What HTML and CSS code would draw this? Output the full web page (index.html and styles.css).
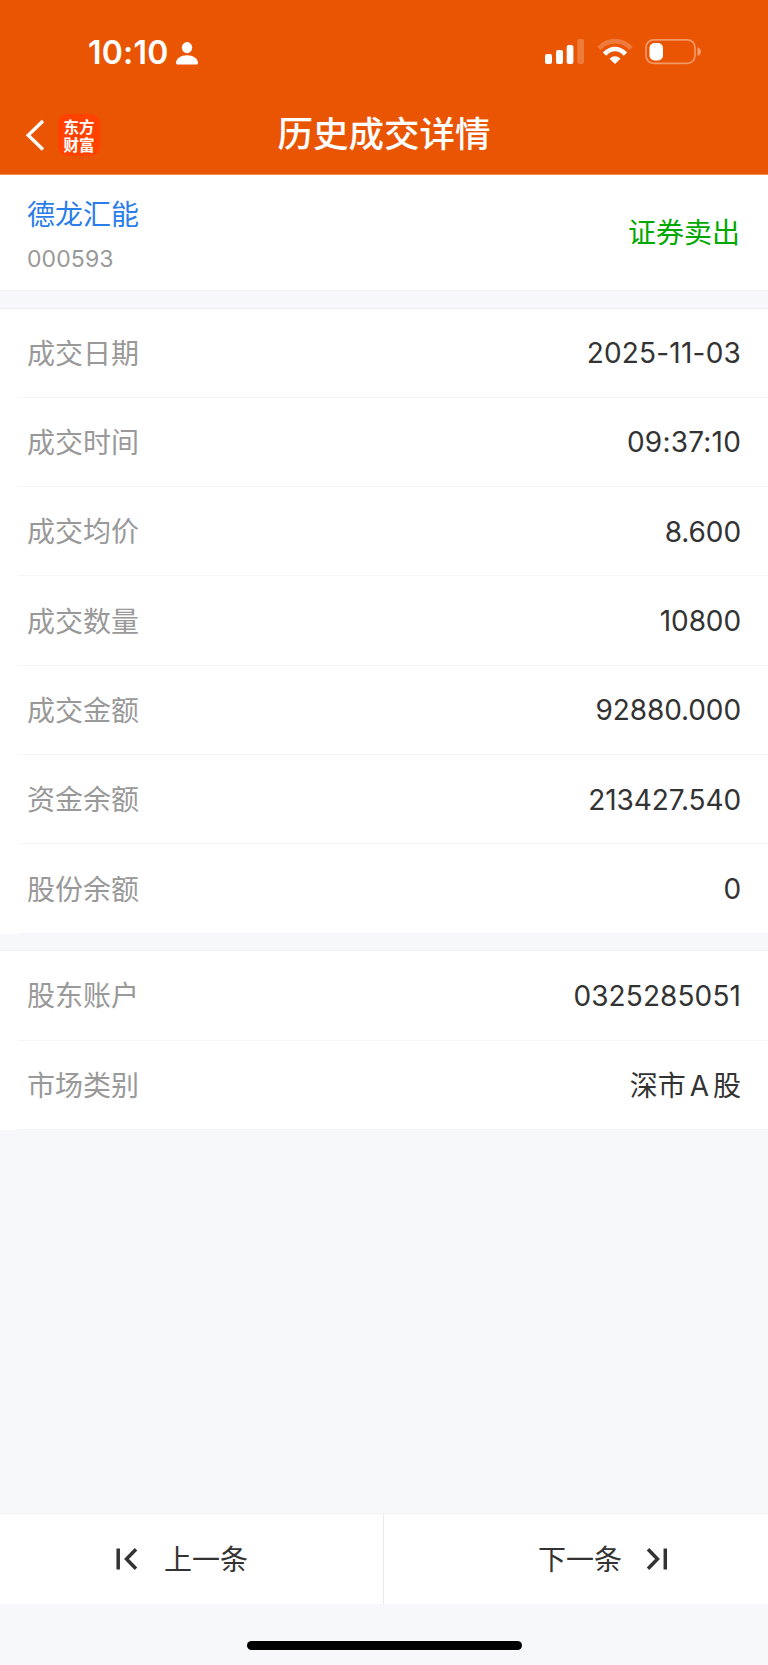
FILE: index.html
```html
<!DOCTYPE html>
<html lang="zh-CN">
<head>
<meta charset="utf-8">
<title>历史成交详情</title>
<link rel="stylesheet" href="styles.css">
</head>
<body>
<div class="screen">
  <header class="header">
    <div class="status">
      <span class="clock">10:10</span>
      <svg class="person" width="22" height="23" viewBox="0 0 22 23"><ellipse cx="11" cy="5.6" rx="5.2" ry="5.6"/><path d="M0 21C0 16.500 5 13.200 11 13.200S22 16.500 22 21Q22 22.500 20.300 22.500H1.700Q0 22.500 0 21Z"/></svg>
      <svg class="signals" width="160" height="30" viewBox="0 0 160 30">
        <g fill="#fff"><rect x="1" y="16" width="7" height="10" rx="2"/><rect x="12" y="12" width="7" height="14" rx="2"/><rect x="22.700" y="7" width="6.700" height="19" rx="2"/><rect x="33.300" y="1" width="6.700" height="25" rx="2" opacity=".22"/></g>
        <g fill="none" stroke="#fff" stroke-width="4.700"><path opacity=".22" d="M55 10.300C64 .8 78 .8 87 10.300"/><path d="M60.500 16.100C67 9.300 75 9.300 81.500 16.100"/></g>
        <path fill="#fff" d="M65.500 20.700Q71 15.900 76.500 20.700L71 26Z"/>
        <rect x="102" y="1.900" width="49" height="23.400" rx="7.500" fill="none" stroke="#fff" stroke-width="1.700" opacity=".4"/>
        <rect x="105.500" y="5" width="13.500" height="17.500" rx="5" fill="#fff"/>
        <path fill="#fff" opacity=".45" d="M153.500 9.300C158 10.500 158 17 153.500 18Z"/>
      </svg>
    </div>
    <div class="navbar">
      <div class="nav-left">
        <svg width="20" height="34" viewBox="0 0 20 34" fill="none" stroke="#fff" stroke-width="3.400"><path d="M18 3L3.200 17.300L18 31.500"/></svg>
        <div class="logo">东方<br>财富</div>
      </div>
      <h1 class="title">历史成交详情</h1>
    </div>
  </header>
  <section class="stock">
    <div class="stock-id"><span class="name">德龙汇能</span><span class="code">000593</span></div>
    <span class="side">证券卖出</span>
  </section>
  <section class="group">
    <div class="row"><span class="label">成交日期</span><span class="value date">2025-11-03</span></div>
    <div class="row"><span class="label">成交时间</span><span class="value date">09:37:10</span></div>
    <div class="row"><span class="label">成交均价</span><span class="value">8.600</span></div>
    <div class="row"><span class="label">成交数量</span><span class="value">10800</span></div>
    <div class="row"><span class="label">成交金额</span><span class="value">92880.000</span></div>
    <div class="row"><span class="label">资金余额</span><span class="value">213427.540</span></div>
    <div class="row"><span class="label">股份余额</span><span class="value">0</span></div>
  </section>
  <section class="group">
    <div class="row"><span class="label">股东账户</span><span class="value account">0325285051</span></div>
    <div class="row"><span class="label">市场类别</span><span class="value market">深市<span class="latin">A</span>股</span></div>
  </section>
  <footer class="footer">
    <div class="pager">
      <div class="page prev"><svg width="22" height="24" viewBox="0 0 22 24" fill="none" stroke="#333" stroke-width="3.500"><path d="M2.200 1.500V22.500M20 2.200L10.500 12L20 21.800"/></svg><span class="page-text">上一条</span></div>
      <div class="page next"><span class="page-text">下一条</span><svg width="22" height="24" viewBox="0 0 22 24" fill="none" stroke="#333" stroke-width="3.500"><path d="M19.300 1.500V22.500M2 2.200L11.500 12L2 21.800"/></svg></div>
    </div>
    <div class="home-indicator"></div>
  </footer>
</div>
</body>
</html>
```

FILE: styles.css
```css
* { box-sizing: border-box; }
body { margin: 0; background: #f7f8fa; color: #333; font-family: Inter, "Noto Sans CJK SC", sans-serif; font-size: 28px; }
svg { display: block; flex: none; }
.screen { height: 1665px; display: flex; flex-direction: column; }
.header { height: 175px; background: #ea5504; color: #fff; border-bottom: 1px solid #f08a50; flex: none; }
.status { height: 98px; padding: 8px 64px 0 88px; display: flex; align-items: center; }
.clock { font-size: 32px; font-weight: 600; line-height: 40px; width: 88px; white-space: nowrap; letter-spacing: .2px; }
.person { fill: #fff; }
.signals { margin-left: auto; }
.navbar { height: 76px; display: grid; grid-template-columns: 1fr auto 1fr; align-items: center; }
.nav-left { display: flex; align-items: center; gap: 13px; padding: 0 0 3px 25px; }
.logo { width: 42px; height: 42px; padding-top: 3px; border-radius: 9px; background: #ff4200; text-align: center; font: 700 15.500px/18px "Noto Sans CJK SC", sans-serif; }
.title { margin: 0; font-size: 35.5px; font-weight: 500; line-height: 50px; padding-bottom: 3px; }
.stock { height: 116px; flex: none; background: #fff; border-bottom: 1px solid #f1f2f4; padding: 0 28px 0 27px; display: flex; justify-content: space-between; align-items: center; }
.stock-id { display: flex; flex-direction: column; padding-top: 8px; }
.name { color: #2b7de9; line-height: 44px; }
.code { color: #999; font-size: 23px; line-height: 44px; letter-spacing: .1px; }
.side { color: #00a800; padding-bottom: 4px; }
.group { flex: none; margin-top: 17.500px; background: #fff; box-shadow: 0 -1px #f0f1f3; }
.row { height: 89.330px; margin-left: 18px; padding: 0 27px 0 9px; border-bottom: 1px solid #f4f5f6; display: flex; align-items: center; justify-content: space-between; }
.label { color: #999; padding-bottom: 2px; }
.value { letter-spacing: -.1px; padding-top: 1px; }
.value.date { letter-spacing: .2px; }
.value.account { letter-spacing: .1px; }
.value.market { letter-spacing: 0; padding: 0 0 2px; }
.latin { margin: 0 4px; }
.footer { margin-top: auto; height: 152px; flex: none; }
.pager { height: 91px; background: #fff; border-top: 1px solid #eeeff3; display: grid; grid-template-columns: 384px 1fr; }
.page { display: flex; align-items: center; gap: 26px; }
.page-text { padding-bottom: 3px; }
.prev { padding-left: 116px; border-right: 1px solid #e9eaee; }
.next { padding-left: 154px; gap: 24px; }
.home-indicator { width: 275px; height: 9px; margin: 37px auto 0; border-radius: 5px; background: #000; }
```
